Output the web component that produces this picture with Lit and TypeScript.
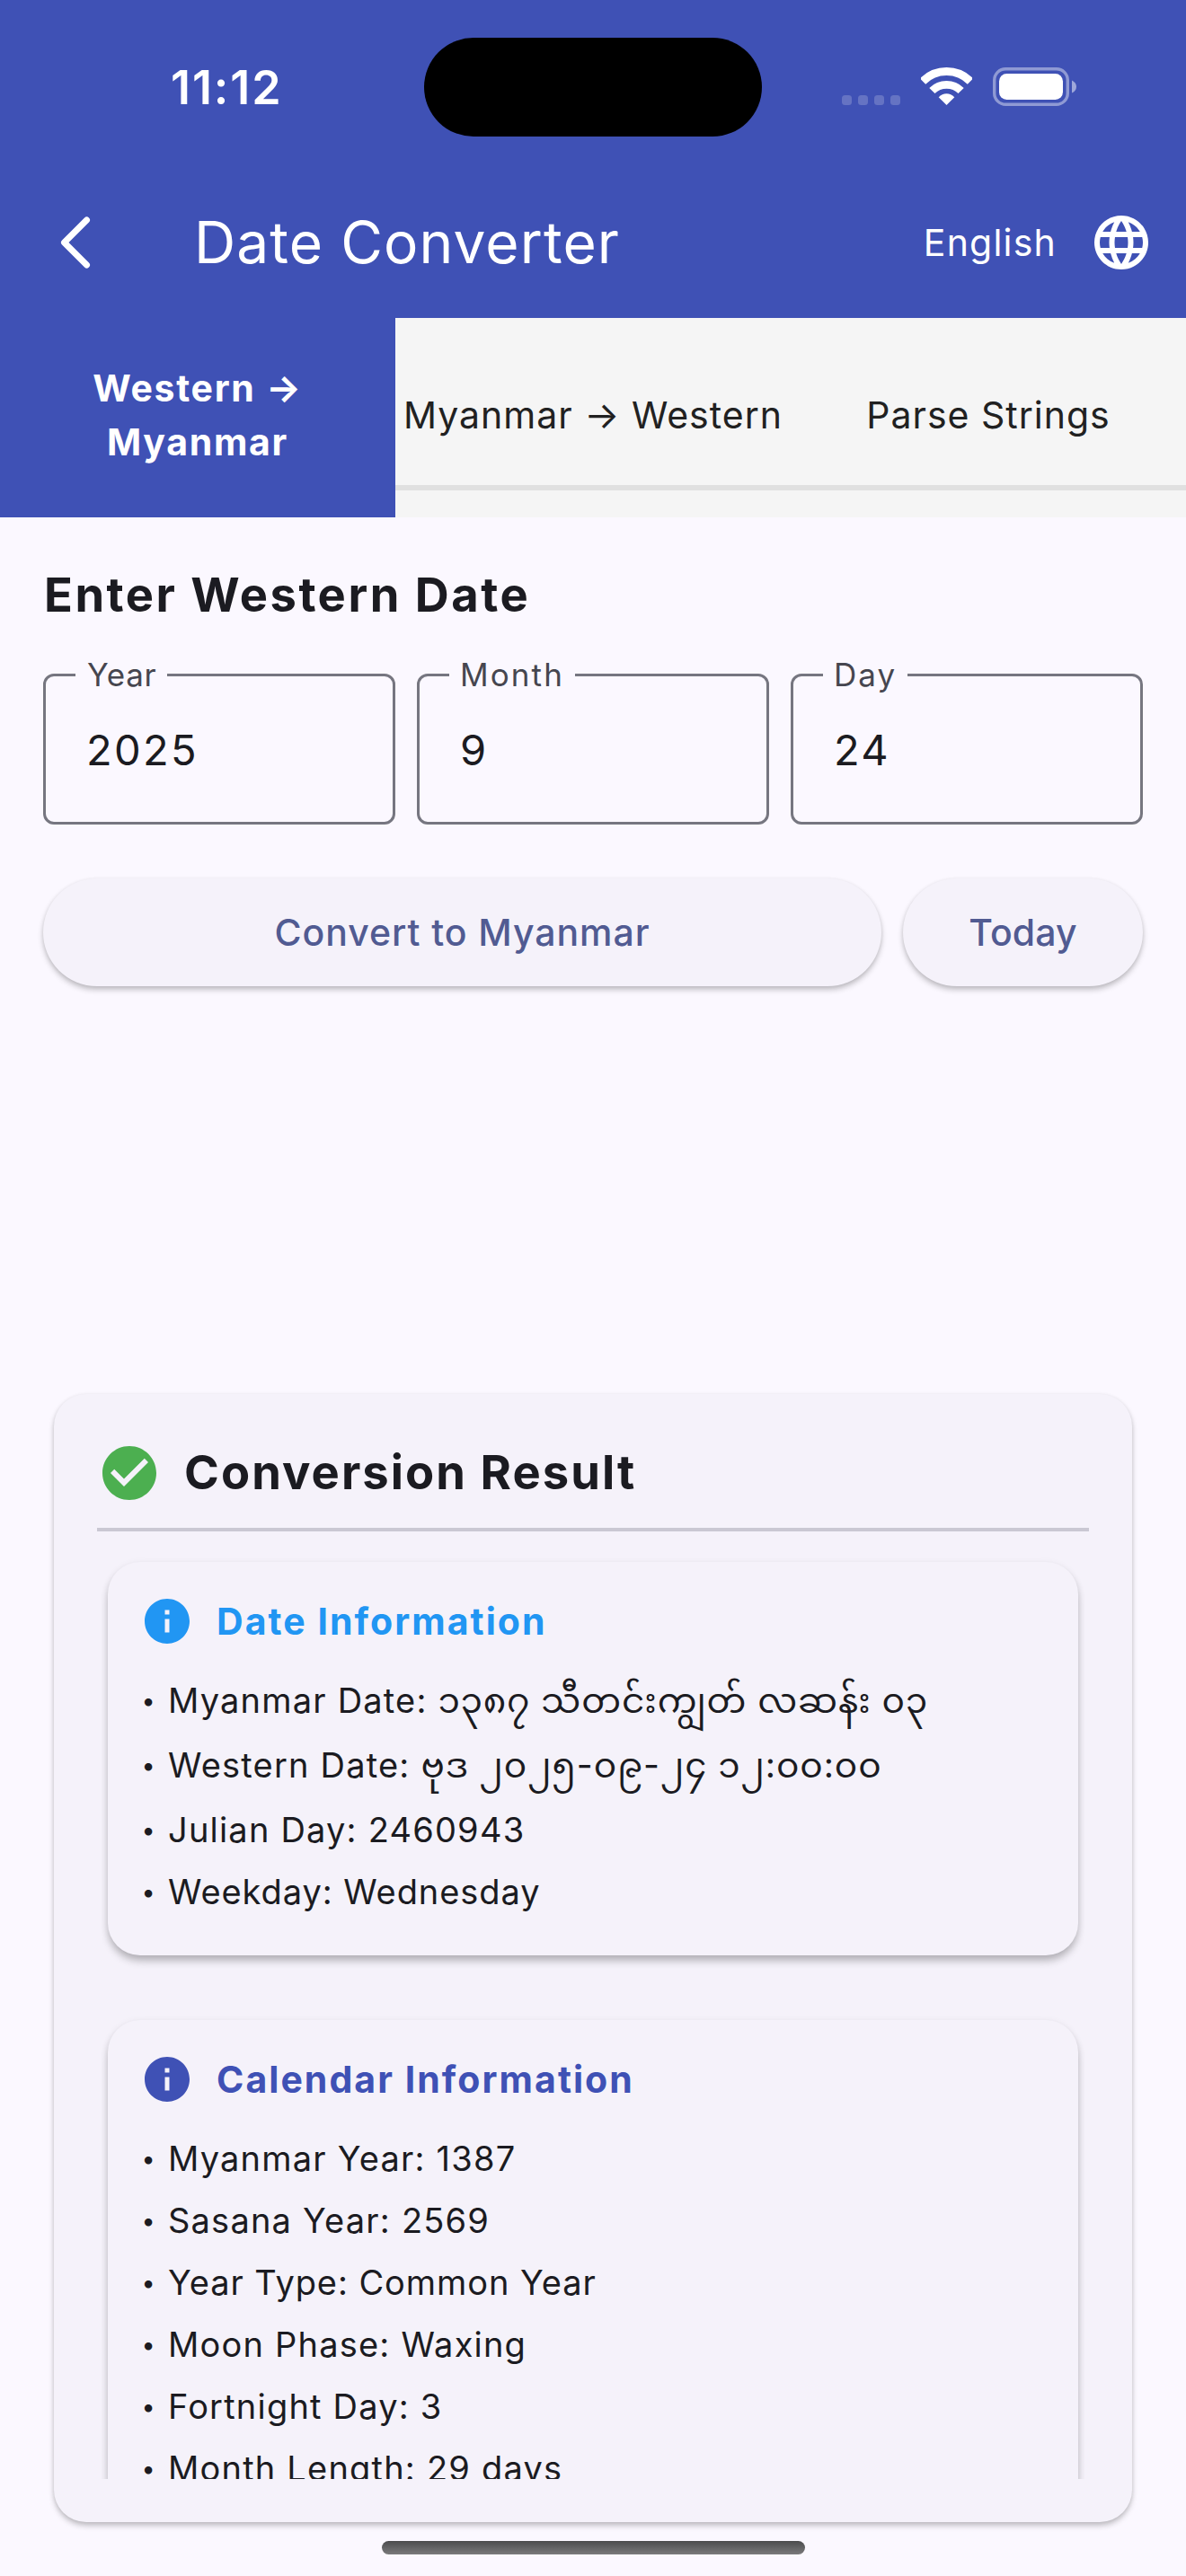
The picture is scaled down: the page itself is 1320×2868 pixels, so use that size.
import { LitElement, html, css, svg } from "lit";
import { customElement, property } from "lit/decorators.js";

const ICONS: Record<string, string> = {
  language:
    "M11.99 2C6.47 2 2 6.48 2 12s4.47 10 9.99 10C17.52 22 22 17.52 22 12S17.52 2 11.99 2zm6.93 6h-2.95c-.32-1.25-.78-2.45-1.38-3.56 1.84.63 3.37 1.91 4.33 3.56zM12 4.04c.83 1.2 1.48 2.53 1.91 3.96h-3.82c.43-1.43 1.08-2.76 1.91-3.96zM4.26 14C4.1 13.36 4 12.69 4 12s.1-1.36.26-2h3.38c-.08.66-.14 1.32-.14 2s.06 1.34.14 2H4.26zm.82 2h2.95c.32 1.25.78 2.45 1.38 3.56-1.84-.63-3.37-1.9-4.33-3.56zm2.95-8H5.08c.96-1.66 2.49-2.93 4.33-3.56C8.81 5.55 8.35 6.75 8.03 8zM12 19.96c-.83-1.2-1.48-2.53-1.91-3.96h3.82c-.43 1.43-1.08 2.76-1.91 3.96zM14.34 14H9.66c-.09-.66-.16-1.32-.16-2s.07-1.35.16-2h4.68c.09.65.16 1.32.16 2s-.07 1.34-.16 2zm.25 5.56c.6-1.11 1.06-2.31 1.38-3.56h2.95c-.96 1.65-2.49 2.93-4.33 3.56zM16.36 14c.08-.66.14-1.32.14-2s-.06-1.34-.14-2h3.38c.16.64.26 1.31.26 2s-.1 1.36-.26 2h-3.38z",
  check:
    "M12 2C6.48 2 2 6.48 2 12s4.48 10 10 10 10-4.48 10-10S17.52 2 12 2zm-2 15l-5-5 1.41-1.41L10 14.17l7.59-7.59L19 8l-9 9z",
  info: "M12 2C6.48 2 2 6.48 2 12s4.48 10 10 10 10-4.48 10-10S17.52 2 12 2zm1 15h-2v-6h2v6zm0-8h-2V7h2v2z",
};

const icon = (name: string, size: number) =>
  html`<svg width=${size} height=${size} viewBox="0 0 24 24" fill="currentColor"><path d=${ICONS[name]} /></svg>`;

interface Row {
  label: string;
  value: string;
  burmese?: "date" | "time";
  tight?: boolean;
}

@customElement("status-bar")
class StatusBar extends LitElement {
  static styles = css`
    :host { display: grid; grid-template-columns: 472px 376px 472px; grid-template-rows: 110px; padding: 42px 0 34px; color: #fff; }
    .time { padding-left: 190px; font-size: 52px; font-weight: 620; line-height: 112px; letter-spacing: 1.9px; }
    .island { background: #000; border-radius: 55px; }
    .signals { display: flex; align-items: center; gap: 23px; padding-left: 89px; }
    svg { display: block; }
  `;
  render() {
    return html`
      <div class="time">11:12</div>
      <div class="island"></div>
      <div class="signals">
        <svg width="65" height="44" fill="#fff" fill-opacity=".2">
          ${[0, 18, 36, 54].map((x) => svg`<rect x=${x} y="31" width="11" height="11" rx="3.5" />`)}
        </svg>
        <svg width="57" height="44" fill="none" stroke="#fff">
          <path d="M2 15.5A37.5 37.5 0 0 1 55 15.5" stroke-width="9" />
          <path d="M12.4 26A22.8 22.8 0 0 1 44.6 26" stroke-width="8.8" />
          <path d="M28.5 42L19.7 33.2Q23.5 29.2 28.5 29.2T37.3 33.2Z" fill="#fff" stroke="none" />
        </svg>
        <svg width="94" height="44">
          <rect x="1.7" y="1.7" width="81.6" height="39.6" rx="12.5" fill="none" stroke="#fff" stroke-opacity=".42" stroke-width="3.4" />
          <rect x="7" y="7" width="71" height="29" rx="8.5" fill="#fff" />
          <path d="M88 14.5Q93 17 93 21.5T88 28.5Z" fill="#fff" fill-opacity=".5" />
        </svg>
      </div>
    `;
  }
}

@customElement("number-field")
class NumberField extends LitElement {
  @property() label = "";
  @property() value = "";
  static styles = css`
    :host { display: block; flex: 1; min-width: 0; }
    fieldset { box-sizing: border-box; height: 189px; min-width: 0; margin: 0; padding: 0 33px; border: 3px solid #767680; border-radius: 12px; }
    legend { padding: 0 12px; font-size: 35px; line-height: 45px; letter-spacing: 2.1px; color: #46464f; }
    :host([label="Year"]) legend { letter-spacing: 0.7px; padding-left: 13px; }
    .value { padding-left: 12px; font-size: 47px; line-height: 122px; letter-spacing: 2.3px; color: #1b1b21; }
  `;
  render() {
    return html`<fieldset><legend>${this.label}</legend><div class="value">${this.value}</div></fieldset>`;
  }
}

@customElement("info-card")
class InfoCard extends LitElement {
  @property() heading = "";
  @property({ attribute: false }) rows: Row[] = [];
  static styles = css`
    :host { display: block; padding: 36px; background: #f5f2fa; border-radius: 36px; box-shadow: 0 7px 10px -1px rgba(0, 0, 0, 0.24), 0 2px 9px rgba(0, 0, 0, 0.08); }
    header { display: flex; align-items: center; gap: 25px; height: 60px; margin-bottom: 24px; font-size: 41px; font-weight: 700; letter-spacing: 2.05px; }
    svg { display: block; }
    .row { display: flex; height: 69px; font-size: 38px; line-height: 69px; letter-spacing: 1.2px; color: #1b1b21; white-space: pre; }
    .row.tall { height: 72px; }
    .row.tight { letter-spacing: 0.92px; }
    .dot { width: 18px; margin-right: 13px; text-align: center; font-size: 27px; letter-spacing: 0; }
    .date, .time { font-size: 39px; line-height: 0; letter-spacing: 0.95px; }
  `;
  render() {
    return html`
      <header>${icon("info", 60)}<span>${this.heading}</span></header>
      ${this.rows.map(
        (r) => html`<div class="row ${r.burmese ? "tall" : ""} ${r.tight ? "tight" : ""}"><span class="dot">•</span><span>${r.label}: <span class=${r.burmese ?? ""}>${r.value}</span></span></div>`
      )}
    `;
  }
}

@customElement("app-root")
class AppRoot extends LitElement {
  static styles = css`
    :host { display: flex; flex-direction: column; height: 2868px; overflow: hidden; background: #fbf8ff; color: #1b1b21; font-family: Inter, "Noto Sans Myanmar", Padauk, sans-serif; }
    svg { display: block; }
    .top { background: #3f51b5; color: #fff; }
    .bar { display: flex; align-items: center; height: 168px; padding: 0 36px 0 60px; }
    .title { margin-left: 108px; flex: 1; font-size: 64px; line-height: 170px; letter-spacing: 1.1px; }
    .lang { margin-right: 36px; font-size: 41px; letter-spacing: 1.2px; }
    .tabs { display: grid; grid-template-columns: repeat(3, 1fr); height: 222px; background: #f5f5f5; }
    .tab { box-sizing: border-box; display: flex; align-items: center; justify-content: center; height: 192px; padding: 48px 0 18px; border-bottom: 6px solid #e0e0e0; font-size: 41px; line-height: 60px; letter-spacing: 1px; text-align: center; color: #212121; white-space: nowrap; }
    .tab.active { height: 222px; padding-bottom: 48px; border-color: #3f51b5; background: #3f51b5; color: #fff; font-weight: 700; letter-spacing: 1.7px; white-space: pre; }
    .form { padding: 50px 48px 0; }
    h1, h2 { margin: 0; font-size: 52.5px; font-weight: 700; letter-spacing: 2.5px; }
    h1 { line-height: 72px; padding-left: 1px; }
    .fields { display: flex; gap: 24px; margin-top: 31px; }
    .actions { display: flex; gap: 24px; margin-top: 60px; }
    .btn { height: 120px; border-radius: 60px; background: #f5f2fa; box-shadow: 0 4px 6px rgba(0, 0, 0, 0.22), 0 1px 4px rgba(0, 0, 0, 0.07); color: #515b92; font-size: 41px; font-weight: 500; line-height: 120px; letter-spacing: 0.95px; text-align: center; }
    .convert { flex: 1; }
    .today { width: 267px; letter-spacing: 0.1px; }
    .result { box-sizing: border-box; display: flex; flex-direction: column; height: 1256px; margin: 454px 60px 0; padding: 48px; border-radius: 36px; background: #f5f2fa; box-shadow: 0 4px 6px rgba(0, 0, 0, 0.22), 0 1px 4px rgba(0, 0, 0, 0.07); }
    .head { display: flex; align-items: center; gap: 25px; height: 80px; }
    .head svg { color: #4caf50; }
    h2 { letter-spacing: 2.05px; line-height: 76px; padding-bottom: 2px; }
    .rule { flex: none; height: 4px; margin: 21px 0 22px; background: #cac8d3; }
    .scroll { flex: 1; min-height: 0; overflow: hidden; padding: 12px; }
    .blue { color: #2196f3; }
    .indigo { margin-top: 72px; color: #3f51b5; }
    .home { width: 471px; height: 15px; margin: 21px 0 0 425px; border-radius: 8px; background: linear-gradient(#4b4b4d, #7a7a7c); }
  `;

  private dateRows: Row[] = [
    { label: "Myanmar Date", value: "၁၃၈၇ သီတင်းကျွတ် လဆန်း ၀၃", burmese: "date" },
    { label: "Western Date", value: "ဗုဒ ၂၀၂၅-၀၉-၂၄ ၁၂:၀၀:၀၀", burmese: "time" },
    { label: "Julian Day", value: "2460943" },
    { label: "Weekday", value: "Wednesday", tight: true },
  ];

  private calendarRows: Row[] = [
    { label: "Myanmar Year", value: "1387" },
    { label: "Sasana Year", value: "2569" },
    { label: "Year Type", value: "Common Year", tight: true },
    { label: "Moon Phase", value: "Waxing" },
    { label: "Fortnight Day", value: "3" },
    { label: "Month Length", value: "29 days" },
  ];

  render() {
    return html`
      <div class="top">
        <status-bar></status-bar>
        <div class="bar">
          <svg width="48" height="72" fill="none" stroke="#fff" stroke-width="7" stroke-linecap="round" stroke-linejoin="round">
            <path d="M36.5 11L11.5 36L36.5 61" />
          </svg>
          <div class="title">Date Converter</div>
          <div class="lang">English</div>
          ${icon("language", 72)}
        </div>
      </div>
      <div class="tabs">
        <div class="tab active">Western →<br />Myanmar</div>
        <div class="tab">Myanmar → Western</div>
        <div class="tab">Parse Strings</div>
      </div>
      <div class="form">
        <h1>Enter Western Date</h1>
        <div class="fields">
          <number-field label="Year" value="2025"></number-field>
          <number-field label="Month" value="9"></number-field>
          <number-field label="Day" value="24"></number-field>
        </div>
        <div class="actions">
          <div class="btn convert">Convert to Myanmar</div>
          <div class="btn today">Today</div>
        </div>
      </div>
      <section class="result">
        <div class="head">${icon("check", 72)}<h2>Conversion Result</h2></div>
        <div class="rule"></div>
        <div class="scroll">
          <info-card class="blue" heading="Date Information" .rows=${this.dateRows}></info-card>
          <info-card class="indigo" heading="Calendar Information" .rows=${this.calendarRows}></info-card>
        </div>
      </section>
      <div class="home"></div>
    `;
  }
}
